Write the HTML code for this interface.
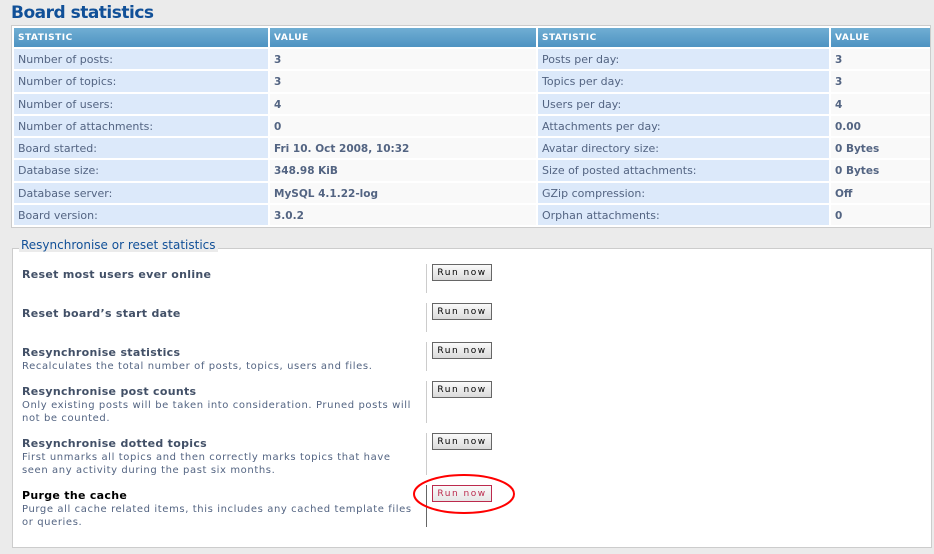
<!DOCTYPE html>
<html><head><style>
body{margin:0;width:934px;height:554px;background:#ebebeb;font-family:"DejaVu Sans",Verdana,sans-serif;font-size:10px;color:#536482;position:relative;overflow:hidden}
h1{position:absolute;left:11px;top:3px;margin:0;font:bold 17px "DejaVu Sans",sans-serif;color:#115098;letter-spacing:-0.5px}
.tbl{position:absolute;left:11px;top:25px;width:918px;height:201px;background:#fff;border:1px solid #ccc}
.g{position:absolute;left:2px;top:2px;width:914px;display:grid;grid-template-columns:254px 266px 291px 99px;grid-template-rows:19px repeat(8,20.25px);gap:2px}
.g div{padding-left:4px;white-space:nowrap;overflow:hidden}
.h{background:linear-gradient(#70aed3,#4e93c2);color:#fff;font-size:9px;font-weight:bold;line-height:20px;letter-spacing:0.5px}
.a{background:#dce9fa;font-size:11px;line-height:21px}
.b{background:#f9f9f9;font-weight:bold;font-size:10.5px;line-height:23px}
.fs{position:absolute;left:12px;top:248px;width:918px;height:298px;background:#fff;border:1px solid #ccc}
.lg{position:absolute;left:19px;top:238px;background:#ebebeb;padding:0 2px;color:#115098;font-size:12px;}
.row{position:absolute;left:22px;width:410px;line-height:13px;letter-spacing:0.6px;white-space:nowrap}
.row b{font-size:11px;color:#425067;letter-spacing:0.3px}
.sep{position:absolute;left:426px;width:1px;background:#ccc}
.btn{position:absolute;left:432px;width:58px;height:15px;border:1px solid #666;background:linear-gradient(#fafafa,#dadada);font-size:9px;letter-spacing:1.5px;text-align:center;line-height:16px;color:#000}
</style></head><body>
<h1>Board statistics</h1>
<div class="tbl"><div class="g">
<div class="h">STATISTIC</div><div class="h">VALUE</div><div class="h">STATISTIC</div><div class="h">VALUE</div>
<div class="a">Number of posts:</div><div class="b">3</div><div class="a">Posts per day:</div><div class="b">3</div>
<div class="a">Number of topics:</div><div class="b">3</div><div class="a">Topics per day:</div><div class="b">3</div>
<div class="a">Number of users:</div><div class="b">4</div><div class="a">Users per day:</div><div class="b">4</div>
<div class="a">Number of attachments:</div><div class="b">0</div><div class="a">Attachments per day:</div><div class="b">0.00</div>
<div class="a">Board started:</div><div class="b">Fri 10. Oct 2008, 10:32</div><div class="a">Avatar directory size:</div><div class="b">0 Bytes</div>
<div class="a">Database size:</div><div class="b">348.98 KiB</div><div class="a">Size of posted attachments:</div><div class="b">0 Bytes</div>
<div class="a">Database server:</div><div class="b">MySQL 4.1.22-log</div><div class="a">GZip compression:</div><div class="b">Off</div>
<div class="a">Board version:</div><div class="b">3.0.2</div><div class="a">Orphan attachments:</div><div class="b">0</div>
</div></div>
<div class="fs"></div>
<div class="lg">Resynchronise or reset statistics</div>

<div class="row" style="top:268px"><b>Reset most users ever online</b></div>
<div class="sep" style="top:264px;height:29px"></div><div class="btn" style="top:264px">Run now</div>

<div class="row" style="top:307px"><b>Reset board’s start date</b></div>
<div class="sep" style="top:303px;height:29px"></div><div class="btn" style="top:303px">Run now</div>

<div class="row" style="top:346px"><b>Resynchronise statistics</b><br>Recalculates the total number of posts, topics, users and files.</div>
<div class="sep" style="top:342px;height:29px"></div><div class="btn" style="top:342px">Run now</div>

<div class="row" style="top:385px"><b>Resynchronise post counts</b><br>Only existing posts will be taken into consideration. Pruned posts will<br>not be counted.</div>
<div class="sep" style="top:381px;height:42px"></div><div class="btn" style="top:381px">Run now</div>

<div class="row" style="top:437px"><b>Resynchronise dotted topics</b><br>First unmarks all topics and then correctly marks topics that have<br>seen any activity during the past six months.</div>
<div class="sep" style="top:433px;height:42px"></div><div class="btn" style="top:433px">Run now</div>

<div class="row" style="top:489px"><b style="color:#000">Purge the cache</b><br>Purge all cache related items, this includes any cached template files<br>or queries.</div>
<div class="sep" style="top:485px;height:42px;background:#666"></div><div class="btn" style="top:485px;border-color:#bc2a4d;color:#bc2a4d;background:linear-gradient(#fafafa,#e6e6e6)">Run now</div>
<svg style="position:absolute;left:412px;top:472px" width="106" height="44"><ellipse cx="52" cy="22" rx="50" ry="19" fill="none" stroke="#f00" stroke-width="2"/></svg>
</body></html>
